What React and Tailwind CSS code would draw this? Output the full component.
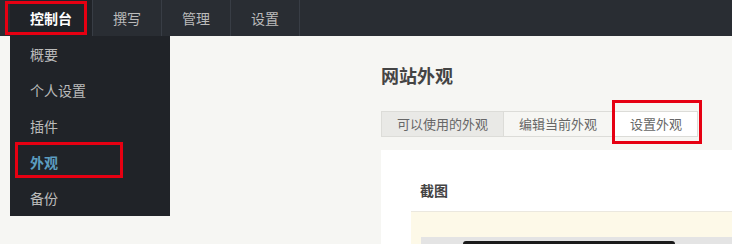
import React from 'react';

const font = { fontFamily: '"Microsoft YaHei", "Noto Sans CJK SC", "Noto Sans", sans-serif' };

const navTabs = ['控制台', '撰写', '管理', '设置'];
const menuItems = ['概要', '个人设置', '插件', '外观', '备份'];
const themeTabs = [
  { label: '可以使用的外观', cls: 'bg-[#e9e9e6]' },
  { label: '编辑当前外观', cls: 'bg-[#f6f6f3] border-l-0' },
  { label: '设置外观', cls: 'bg-white ml-[1px]' },
];

export default function App() {
  return (
    <div className="relative w-[732px] h-[244px] overflow-hidden bg-[#f6f6f3] flex flex-col" style={font}>
      {/* top nav */}
      <div className="h-9 shrink-0 bg-[#292d33] flex pl-[10px]">
        {navTabs.map((tab, i) => (
          <div
            key={tab}
            className={`h-9 px-5 flex items-center text-[14px] border-r border-[#383d45] ${i === 0 ? 'bg-[#202328] text-white font-bold' : 'text-[#bbb]'}`}>
            {tab}
          </div>
        ))}
      </div>

      {/* main */}
      <div className="flex flex-col pl-[381px] pt-[26px]">
        <h2 className="text-[18px] font-bold text-[#444] leading-[26px]">网站外观</h2>
        <div className="flex mt-[23px]">
          {themeTabs.map((t) => (
            <div key={t.label} className={`h-[26px] px-[15px] flex items-center text-[13px] text-[#666] border border-[#dcdcd8] ${t.cls}`}>
              {t.label}
            </div>
          ))}
        </div>
        <div className="mt-[13px] bg-white h-[120px] pt-[32px] flex flex-col">
          <div className="pl-[39px] text-[14px] font-bold text-[#444] leading-4">截图</div>
          <div className="ml-[30px] mt-[13px] bg-[#fdf9e8] border-t border-[#ebe8df] h-[60px] pt-[25px] pl-[10px]">
            <div className="bg-[#e4e4e4] h-[20px] pt-[4px] pl-[42px]">
              <div className="w-[212px] h-[16px] bg-[#1a1a1a] rounded-t-[3px]" />
            </div>
          </div>
        </div>
      </div>

      {/* dropdown menu */}
      <div className="absolute left-[10px] top-9 w-[160px] bg-[#202328] flex flex-col">
        {menuItems.map((m) => (
          <div
            key={m}
            className={`h-9 pl-5 flex items-center text-[14px] ${m === '外观' ? 'text-[#5c9dc0] font-bold' : 'text-[#bbb]'}`}>
            {m}
          </div>
        ))}
      </div>

      {/* highlight boxes */}
      <div className="absolute left-[5px] top-[1px] w-[82px] h-[34px] border-[3px] border-[#e60012]" />
      <div className="absolute left-[15px] top-[142px] w-[108px] h-[36px] border-[3px] border-[#e60012]" />
      <div className="absolute left-[612px] top-[100px] w-[90px] h-[44px] border-[3px] border-[#e60012]" />
    </div>
  );
}
